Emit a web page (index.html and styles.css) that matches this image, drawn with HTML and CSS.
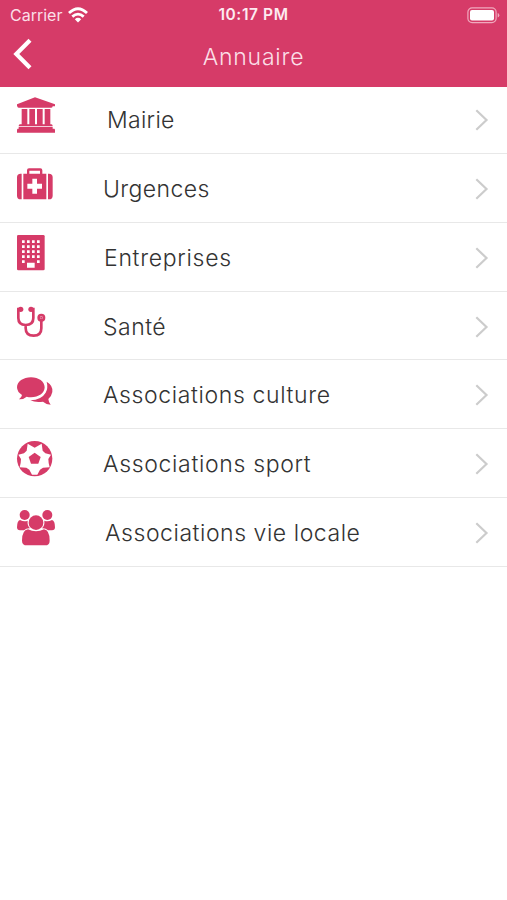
FILE: index.html
```html
<!DOCTYPE html>
<html lang="fr">
<head>
<meta charset="utf-8">
<title>Annuaire</title>
<link rel="stylesheet" href="styles.css">
</head>
<body>
<header class="header">
  <div class="status">
    <div class="carrier"><span>Carrier</span>
      <svg class="wifi" viewBox="0 0 20 16"><g fill="none" stroke="#fff" stroke-width="2.8"><path d="M1 6Q10-2.5 19 6"/><path d="M4.3 9.6Q10 4.6 15.7 9.6"/></g><path d="M6.8 12.2Q10 9.4 13.2 12.2L10 15.4Z" fill="#fff"/></svg>
    </div>
    <div class="time">10:17 PM</div>
    <svg class="battery" viewBox="0 0 33 17"><rect x=".9" y=".9" width="28.2" height="14.7" rx="4.2" fill="none" stroke="#f0a9bd" stroke-width="1.2"/><rect x="3" y="3" width="24" height="10.5" rx="2" fill="#fff"/><path d="M30.7 6q1.6.4 1.6 2.2t-1.6 2.2Z" fill="#f0a9bd"/></svg>
  </div>
  <div class="nav">
    <svg class="back" viewBox="0 0 20 32"><path d="M17 2.2L3.3 16L17 29.8" fill="none" stroke="#fff" stroke-width="4.2"/></svg>
    <h1 class="title">Annuaire</h1>
  </div>
</header>
<main class="list">
  <div class="row first">
    <svg class="icon" viewBox="0 0 126 198"><path d="M57 31L117 52V58H110Q110 62 106 62H8Q4 62 4 58H3V52ZM17 66H34V112H40V66H57V112H63V66H80V112H86V66H103V112H106Q110 112 110 117H8Q8 112 12 112H17ZM8 119H110V125H8ZM5 125H115Q117 126 117 130V137H3V130Q3 126 5 125Z"/></svg>
    <span class="label mairie">Mairie</span>
    <svg class="chevron" viewBox="0 0 14 22"><path d="M1.3 1.3L11.5 11L1.3 20.7"/></svg>
  </div>
  <div class="row">
    <svg class="icon" viewBox="0 0 126 198"><path fill-rule="evenodd" d="M17 59V136H14Q3 136 3 125V70Q3 59 14 59ZM96 59H99Q110 59 110 70V125Q110 136 99 136H96ZM33 59V49Q33 43 39 43H73Q79 43 79 49V59H91V136H22V59ZM40 59H72V50H40ZM49 74V89H34V104H49V119H63V104H78V89H63V74Z"/></svg>
    <span class="label urgences">Urgences</span>
    <svg class="chevron" viewBox="0 0 14 22"><path d="M1.3 1.3L11.5 11L1.3 20.7"/></svg>
  </div>
  <div class="row">
    <svg class="icon" viewBox="0 0 126 198"><rect x="3" y="36" width="83" height="106" rx="4"/><g fill="none" stroke="#fff" stroke-width="8" stroke-dasharray="8 7"><path d="M18 56H71M18 71H71"/><path d="M18 86H71M18 101H71"/></g><path fill="#fff" d="M18 112h8v8h-8zM63 112h8v8h-8zM33 119h23v15H33z"/></svg>
    <span class="label entreprises">Entreprises</span>
    <svg class="chevron" viewBox="0 0 14 22"><path d="M1.3 1.3L11.5 11L1.3 20.7"/></svg>
  </div>
  <div class="row">
    <svg class="icon" viewBox="0 0 126 198"><g fill="none" stroke="#d63b68" stroke-width="8"><path d="M14 51H7V78Q7 99 29 99Q52 99 52 78V51H44M29 99V109Q29 131 53 131Q76 131 76 109V86"/><circle cx="76" cy="77" r="8"/></g><circle cx="14" cy="52" r="8"/><circle cx="45" cy="52" r="8"/><circle cx="76" cy="77" r="3.5"/></svg>
    <span class="label sante">Santé</span>
    <svg class="chevron" viewBox="0 0 14 22"><path d="M1.3 1.3L11.5 11L1.3 20.7"/></svg>
  </div>
  <div class="row">
    <svg class="icon" viewBox="0 0 126 198"><path d="M92 65Q112 77 109 96Q107 108 97 117Q98 127 104 134Q91 134 81 125Q59 129 43 121Q77 119 89 98Q97 85 92 65Z"/><path d="M45 52C68 52 86 65 86 82S68 112 45 112Q38 112 32 110Q22 119 9 118Q17 112 18 105Q3 96 3 82C3 65 22 52 45 52Z"/></svg>
    <span class="label culture">Associations culture</span>
    <svg class="chevron" viewBox="0 0 14 22"><path d="M1.3 1.3L11.5 11L1.3 20.7"/></svg>
  </div>
  <div class="row">
    <svg class="icon" viewBox="0 0 126 198"><circle cx="56" cy="89" r="53"/><path fill="#fff" d="M35 44L56 56L77 44L80 65L88 73L105 77L97 90L98 102L101 115L81 116L72 122L64 137H48L40 122L31 116L11 115L14 102L15 90L7 77L24 73L32 65Z"/><path d="M56 71L74 84L67 104H45L38 84Z"/></svg>
    <span class="label sport">Associations sport</span>
    <svg class="chevron" viewBox="0 0 14 22"><path d="M1.3 1.3L11.5 11L1.3 20.7"/></svg>
  </div>
  <div class="row">
    <svg class="icon" viewBox="0 0 126 198"><circle cx="26" cy="51" r="15"/><circle cx="94" cy="51" r="15"/><circle cx="60" cy="74" r="22"/><path d="M12 66Q25 73 35 68Q33 82 42 91Q31 90 24 97H12Q3 97 3 88Q3 69 12 66ZM108 66Q95 73 85 68Q87 82 78 91Q89 90 96 97H108Q117 97 117 88Q117 69 108 66ZM36 94Q60 106 84 94Q101 96 101 128Q101 142 87 142H33Q18 142 18 128Q18 96 36 94Z"/></svg>
    <span class="label locale">Associations vie locale</span>
    <svg class="chevron" viewBox="0 0 14 22"><path d="M1.3 1.3L11.5 11L1.3 20.7"/></svg>
  </div>
</main>
</body>
</html>
```
FILE: styles.css
```css
* { box-sizing: border-box; }
body { margin: 0; background: #fff; color: #333; font-family: Inter, "Liberation Sans", sans-serif; }
svg { display: block; flex: none; }
.header { height: 87px; background: #d63b68; color: #fff; }
.status { height: 30px; display: grid; grid-template-columns: 1fr auto 1fr; align-items: center; padding: 0 7px 0 10px; font-size: 16px; line-height: 30px; }
.carrier { display: flex; align-items: center; gap: 6px; color: #fbdfe7; }
.wifi { width: 20px; height: 16px; }
.time { font-weight: 600; font-size: 15.5px; letter-spacing: .6px; margin-right: 3px; color: #fdeaf0; }
.battery { width: 33px; height: 17px; justify-self: end; }
.nav { height: 57px; display: grid; grid-template-columns: 40px 1fr 40px; }
.back { width: 20px; height: 32px; margin: 8px 0 0 13px; }
.title { margin: 0; text-align: center; font-size: 23px; font-weight: 300; letter-spacing: .8px; line-height: 55px; color: #fbdfe7; }
.row { height: 68.75px; display: flex; align-items: flex-start; padding: 0 18px 0 16px; border-bottom: 1.5px solid #e8e8e8; }
.first { height: 67px; }
.icon { width: 42px; height: 66px; fill: #d63b68; }
.label { flex: 1; padding-left: 45px; font-size: 23px; font-weight: 300; line-height: 70px; letter-spacing: .5px; white-space: nowrap; }
.first .label { line-height: 66px; }
.mairie { padding-left: 49px; letter-spacing: .3px; }
.urgences { letter-spacing: .4px; }
.entreprises { padding-left: 46px; letter-spacing: .7px; }
.culture { letter-spacing: .62px; }
.sport { letter-spacing: .67px; }
.locale { padding-left: 47px; letter-spacing: .55px; }
.chevron { width: 14px; height: 22px; margin-top: 24px; fill: none; stroke: #ccc; stroke-width: 2.2; }
.first .chevron { margin-top: 22px; }
```
